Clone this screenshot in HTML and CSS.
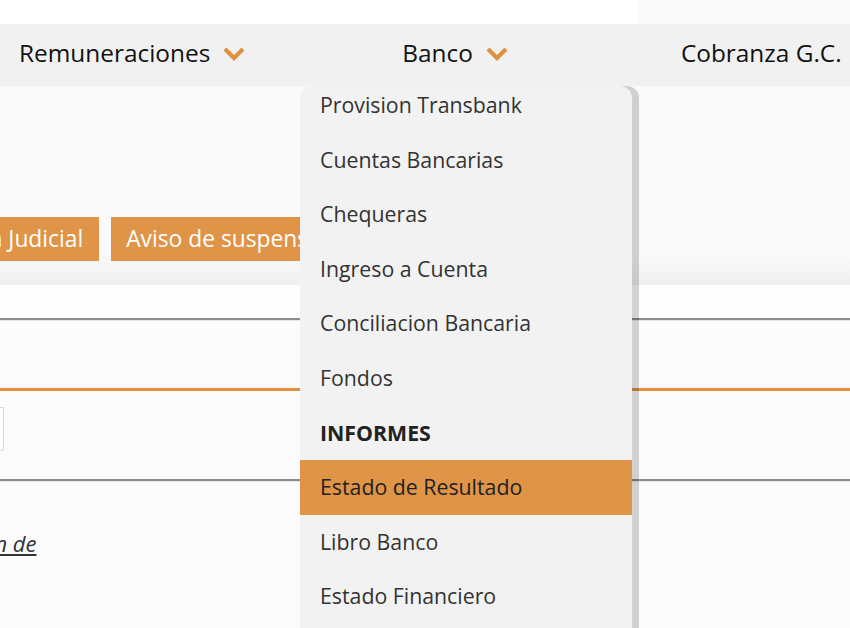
FILE: index.html
```html
<!DOCTYPE html>
<html lang="es">
<head>
<meta charset="utf-8">
<title>Banco</title>
<link rel="stylesheet" href="styles.css">
</head>
<body>
<div class="topbar"><div class="topbar-fill"></div><div class="topbar-side"></div></div>
<nav class="nav">
  <div class="nav-item nav-rem">Remuneraciones <svg class="chev" viewBox="0 0 22 14" width="22" height="14"><path d="M2 2 L11 11 L20 2" fill="none" stroke="#e0913f" stroke-width="4.2"/></svg></div>
  <div class="nav-item nav-banco">Banco <svg class="chev" viewBox="0 0 22 14" width="22" height="14"><path d="M2 2 L11 11 L20 2" fill="none" stroke="#e0913f" stroke-width="4.2"/></svg></div>
  <div class="nav-item nav-cob">Cobranza G.C.</div>
</nav>
<main class="main">
  <section class="hero">
    <div class="btn-row">
      <span class="btn btn-judicial">Cobranza Judicial</span>
      <span class="btn">Aviso de suspensión</span>
    </div>
  </section>
  <div class="gap-a"></div>
  <div class="rule rule-gray"></div>
  <div class="gap-b"></div>
  <div class="rule rule-orange"></div>
  <div class="input-row"><span class="input-box"></span></div>
  <div class="rule rule-gray"></div>
  <p class="link-line"><a class="link">Notificación de</a></p>
</main>
<div class="dropdown">
  <ul class="menu">
    <li>Provision Transbank</li>
    <li>Cuentas Bancarias</li>
    <li>Chequeras</li>
    <li>Ingreso a Cuenta</li>
    <li>Conciliacion Bancaria</li>
    <li>Fondos</li>
    <li class="menu-head">INFORMES</li>
    <li class="active">Estado de Resultado</li>
    <li>Libro Banco</li>
    <li>Estado Financiero</li>
    <li>Flujo de Caja</li>
  </ul>
</div>
</body>
</html>
```
FILE: styles.css
```css
html, body {
  margin: 0;
  padding: 0;
}
body {
  width: 850px;
  height: 628px;
  overflow: hidden;
  background: #fbfbfb;
  font-family: "Open Sans", "Noto Sans", sans-serif;
  color: #333;
  position: relative;
}
.topbar {
  height: 24px;
  display: flex;
}
.topbar-fill {
  flex: 0 0 638px;
  background: #ffffff;
}
.topbar-side {
  flex: 1;
  background: #fafafa;
}
.nav {
  height: 62px;
  box-sizing: border-box;
  padding-bottom: 6px;
  background: #f1f1f1;
  display: flex;
  align-items: center;
  font-size: 24.4px;
  color: #111;
  white-space: nowrap;
}
.nav-item {
  display: flex;
  align-items: center;
}
.nav-rem { margin-left: 19px; }
.nav-banco { margin-left: 157px; }
.nav-cob { margin-left: 173px; }
.chev {
  margin-left: 13px;
  margin-top: 4px;
}
.main {
  display: flex;
  flex-direction: column;
}
.hero {
  height: 199px;
  background: linear-gradient(to bottom, #fafafa 0%, #fafafa 85%, #efefef 100%);
  overflow: hidden;
}
.btn-row {
  display: flex;
  gap: 12px;
  margin-top: 131px;
  margin-left: -114px;
}
.btn {
  background: #df9447;
  color: #fff;
  font-size: 22.8px;
  height: 44px;
  line-height: 44px;
  padding: 0 16px 0 15px;
  white-space: nowrap;
}
.gap-a {
  height: 33px;
  background: #fdfdfd;
}
.gap-b {
  height: 67px;
  background: #fcfcfc;
}
.rule {
  flex: 0 0 auto;
}
.rule-gray {
  height: 2px;
  background: #8c8c8c;
  border-bottom: 1px solid #e6e6e6;
}
.rule-orange {
  height: 3px;
  background: #e0913f;
}
.input-row {
  height: 88px;
  display: flex;
  align-items: flex-start;
}
.input-box {
  margin-top: 16px;
  margin-left: -40px;
  width: 42px;
  height: 42px;
  background: #fff;
  border: 1px solid #dcdcdc;
}
.link-line {
  margin: 46px 0 0 -109px;
  font-size: 22px;
  white-space: nowrap;
}
.link {
  font-style: italic;
  text-decoration: underline;
  color: #333;
}
.dropdown {
  position: absolute;
  left: 300px;
  top: 86px;
  width: 332px;
  height: 560px;
  background: #f2f2f2;
  border-radius: 10px 12px 0 0;
  box-shadow: 7px 0 0 rgba(0, 0, 0, 0.17);
  overflow: hidden;
}
.menu {
  list-style: none;
  margin: -8px 0 0 0;
  padding: 0;
}
.menu li {
  height: 54.6px;
  line-height: 54.6px;
  padding-left: 20px;
  font-size: 21.3px;
  color: #333;
  white-space: nowrap;
}
.menu li.menu-head {
  font-weight: 700;
  color: #222;
}
.menu li.active {
  background: #df9447;
  color: #222;
}
```
